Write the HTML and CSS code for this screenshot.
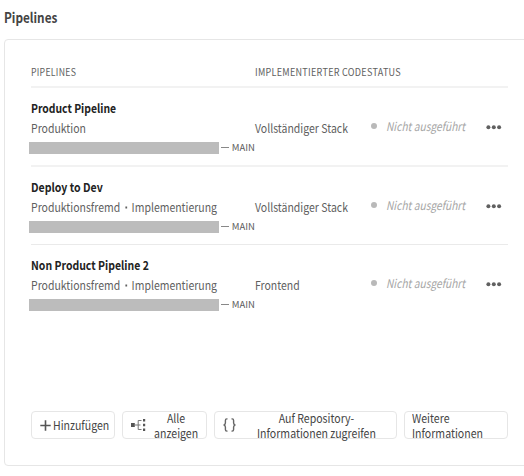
FILE: index.html
```html
<!DOCTYPE html>
<html lang="de">
<head>
<meta charset="utf-8">
<title>Pipelines</title>
<link rel="stylesheet" href="styles.css">
</head>
<body>
<h1 class="heading">Pipelines</h1>
<main class="card">
  <div class="columns"><div class="col-name"><span>PIPELINES</span></div><div class="col-code"><span>IMPLEMENTIERTER CODESTATUS</span></div></div>
  <section class="row row-first">
    <div class="pipeline">
      <div class="name"><span>Product Pipeline</span></div>
      <div class="type"><span>Produktion</span></div>
      <div class="repo"><i class="redacted"></i><span class="dash"></span><span class="branch">MAIN</span></div>
    </div>
    <div class="code"><span>Vollständiger Stack</span></div>
    <i class="dot"></i>
    <div class="status"><span>Nicht ausgeführt</span></div>
    <svg class="more" viewBox="0 0 16 6"><circle cx="2.4" cy="3.3" r="2"/><circle cx="7.8" cy="3.3" r="2"/><circle cx="13.1" cy="3.3" r="2"/></svg>
  </section>
  <section class="row row-second">
    <div class="pipeline">
      <div class="name"><span>Deploy to Dev</span></div>
      <div class="type"><span>Produktionsfremd<b class="sep"></b>Implementierung</span></div>
      <div class="repo"><i class="redacted"></i><span class="dash"></span><span class="branch">MAIN</span></div>
    </div>
    <div class="code"><span>Vollständiger Stack</span></div>
    <i class="dot"></i>
    <div class="status"><span>Nicht ausgeführt</span></div>
    <svg class="more" viewBox="0 0 16 6"><circle cx="2.4" cy="3.3" r="2"/><circle cx="7.8" cy="3.3" r="2"/><circle cx="13.1" cy="3.3" r="2"/></svg>
  </section>
  <section class="row row-last">
    <div class="pipeline">
      <div class="name"><span>Non Product Pipeline 2</span></div>
      <div class="type"><span>Produktionsfremd<b class="sep"></b>Implementierung</span></div>
      <div class="repo"><i class="redacted"></i><span class="dash"></span><span class="branch">MAIN</span></div>
    </div>
    <div class="code"><span>Frontend</span></div>
    <i class="dot"></i>
    <div class="status"><span>Nicht ausgeführt</span></div>
    <svg class="more" viewBox="0 0 16 6"><circle cx="2.4" cy="3.3" r="2"/><circle cx="7.8" cy="3.3" r="2"/><circle cx="13.1" cy="3.3" r="2"/></svg>
  </section>
  <footer class="actions">
    <button class="btn add"><svg class="icon-plus" viewBox="0 0 11 11"><path d="M5.5 .3V10.7M.3 5.5H10.7"/></svg><span>Hinzufügen</span></button>
    <button class="btn all"><svg class="icon-tree" viewBox="0 0 15 12"><path class="line" d="M4 6H9.5M10.5 1.5H7.2V10.5H10.5"/><path d="M0 4H3.8V8H0ZM12 0H14.2V2.4H12ZM12 4.8H14.2V7.2H12ZM12 9.6H14.2V12H12Z"/></svg><span>Alle<br>anzeigen</span></button>
    <button class="btn info"><svg class="icon-braces" viewBox="0 0 13 14"><path d="M4.5 .9H3.8Q2.4 .9 2.4 2.4V5Q2.4 6.6 .7 7Q2.4 7.4 2.4 9V11.6Q2.4 13.1 3.8 13.1H4.5M8.5 .9H9.2Q10.6 .9 10.6 2.4V5Q10.6 6.6 12.3 7Q10.6 7.4 10.6 9V11.6Q10.6 13.1 9.2 13.1H8.5"/></svg><span>Auf Repository-<br>Informationen zugreifen</span></button>
    <button class="btn learn"><span>Weitere<br>Informationen</span></button>
  </footer>
</main>
</body>
</html>
```
FILE: styles.css
```css
* { box-sizing: border-box; }
body {
  margin: 0;
  height: 476px;
  overflow: hidden;
  background: #fff;
  color: #606060;
  font: 12px/20px "Noto Sans CJK JP", "Noto Sans", sans-serif;
  white-space: nowrap;
}
.heading {
  width: 100px;
  margin: 7px 0 12px 4px;
  font-size: 14px;
  line-height: 20px;
  font-weight: 700;
  color: #444;
  transform: scaleX(.84);
  transform-origin: left;
}
.card {
  width: 540px;
  height: 427px;
  margin-left: 4px;
  padding: 0 0 0 26px;
  border: 1px solid #e6e6e6;
  border-radius: 4px;
}
.name span, .type span, .code span, .status span, .col-name span, .col-code span, .btn span {
  display: inline-block;
  transform: scaleX(.874);
  transform-origin: left;
}
.columns {
  display: flex;
  width: 477px;
  height: 48px;
  padding-top: 22px;
  border-bottom: 2px solid #f2f2f2;
  font-size: 10px;
}
.col-name { width: 224px; letter-spacing: .3px; }
.col-code { letter-spacing: .3px; }
.columns .col-code span { transform: scaleX(.905); }
.row {
  display: flex;
  width: 477px;
  height: 79px;
  padding-top: 10px;
  border-bottom: 2px solid #f2f2f2;
}
.row-second { height: 78px; border-bottom: 1px solid #eaeaea; }
.row-last { border-bottom: 0; height: 166px; }
.pipeline { width: 224px; }
.name { height: 19px; font-weight: 700; color: #222; }
.name span { transform: scaleX(.865); }
.row-second .name span { transform: scaleX(.88); }
.row-last .name span { transform: scaleX(.872); }
.type { height: 21px; }
.type span, .code span { transform: translateY(.5px) scaleX(.874); }
.sep { display: inline-block; width: 2px; height: 2px; margin: 0 5px 3px 6px; background: #606060; }
.repo { display: flex; align-items: center; margin-left: -2px; font-size: 9.5px; }
.redacted { width: 191px; height: 12px; background: #bcbcbc; }
.branch { margin-top: -1px; }
.dash { width: 8px; height: 1px; margin: 0 3px 0 2px; background: #888; }
.code { width: 116px; padding-top: 19px; }
.dot { width: 6px; height: 6px; margin: 25px 10px 0 0; border-radius: 50%; background: #b9b9b9; }
.status { width: 99px; padding-top: 18px; margin-left: -1px; margin-right: 1px; font-style: italic; color: #a6a6a6; }
.status span { transform: scaleX(.85); }
.more { width: 16px; height: 6px; margin-top: 26px; fill: #606060; }
.actions { display: flex; gap: 7px; }
.btn {
  display: flex;
  align-items: center;
  height: 28px;
  padding: 0;
  border: 1px solid #e6e6e6;
  border-radius: 4px;
  background: #fff;
  color: #444;
  font: 12px/15px "Noto Sans CJK JP", "Noto Sans", sans-serif;
  text-align: center;
}
.btn span { margin-top: -1px; transform: scaleX(.88); }
.add { width: 84px; padding-left: 8px; }
.all { width: 85px; padding-left: 8px; }
.info { width: 183px; padding-left: 8px; }
.learn { width: 104px; padding-left: 7px; text-align: left; }
.btn svg { flex: none; }
.icon-plus { width: 11px; height: 11px; margin-right: 2px; fill: none; stroke: #555; stroke-width: 1.6; }
.icon-tree { width: 15px; height: 12px; margin-right: 8px; fill: #555; }
.icon-tree .line { fill: none; stroke: #777; stroke-width: 1; }
.icon-braces { width: 13px; height: 14px; margin-right: 21px; fill: none; stroke: #666; stroke-width: 1.4; }
```
